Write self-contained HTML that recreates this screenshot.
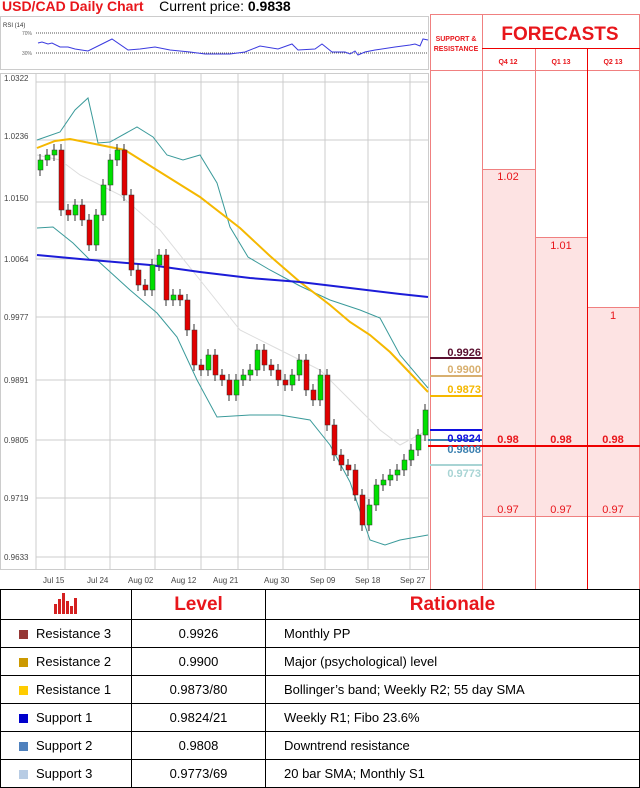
<!DOCTYPE html>
<html><head><meta charset="utf-8"><style>
body{margin:0;width:640px;height:786px;background:#fff;font-family:"Liberation Sans",sans-serif;position:relative;overflow:hidden}
.a{position:absolute}
table{border-collapse:collapse;position:absolute;left:0;top:589px;width:640px;font-size:13px}
td{border:1px solid #000;height:27px;padding:0}
.sq{display:inline-block;width:9px;height:9px;margin:0 8px 0 18px;vertical-align:-1px}
</style></head><body>
<div class="a" style="left:2px;top:-2px;font-size:14px"><b style="color:#e8161b">USD/CAD Daily Chart</b>&nbsp;&nbsp;&nbsp; Current price: <b>0.9838</b></div>
<svg class="a" style="left:0;top:0" width="640" height="590">
<rect x="0.5" y="16.5" width="428" height="53" fill="#fff" stroke="#ccc"/>
<text x="3" y="27" font-size="6" fill="#333">RSI (14)</text>
<text x="22" y="35" font-size="5" fill="#666">70%</text><text x="22" y="55" font-size="5" fill="#666">30%</text>
<line x1="36" y1="33" x2="428" y2="33" stroke="#555" stroke-dasharray="1,1"/>
<line x1="36" y1="53" x2="428" y2="53" stroke="#555" stroke-dasharray="1,1"/>
<polyline fill="none" stroke="#3a3adf" stroke-width="1" points="38,43 42,42 48,44 52,43 60,47 68,47 75,49 88,51 100,45 112,39 128,50 140,49 155,47 170,50 190,52 205,54 230,54 245,52 260,46 278,49 292,44 298,50 315,49 322,44 332,52 345,52 350,54 355,51 358,55 365,52 375,50 395,47 410,45 415,44 420,46 423,39 428,40"/>
<rect x="0.5" y="73.5" width="428" height="496" fill="#fff" stroke="#ccc"/>
<g stroke="#ccc" stroke-width="1">
<line x1="36" y1="82" x2="428" y2="82"/><line x1="36" y1="140" x2="428" y2="140"/><line x1="36" y1="202" x2="428" y2="202"/><line x1="36" y1="259" x2="428" y2="259"/><line x1="36" y1="317" x2="428" y2="317"/><line x1="36" y1="380" x2="428" y2="380"/><line x1="36" y1="440" x2="428" y2="440"/><line x1="36" y1="498" x2="428" y2="498"/><line x1="36" y1="557" x2="428" y2="557"/>
<line x1="36" y1="74" x2="36" y2="569"/>
<line x1="65" y1="74" x2="65" y2="569"/><line x1="110" y1="74" x2="110" y2="569"/><line x1="155" y1="74" x2="155" y2="569"/><line x1="201" y1="74" x2="201" y2="569"/><line x1="238" y1="74" x2="238" y2="569"/><line x1="283" y1="74" x2="283" y2="569"/><line x1="325" y1="74" x2="325" y2="569"/><line x1="368" y1="74" x2="368" y2="569"/><line x1="410" y1="74" x2="410" y2="569"/>
</g>
<g font-size="8" fill="#444">
<text x="4" y="81">1.0322</text><text x="4" y="139">1.0236</text><text x="4" y="201">1.0150</text><text x="4" y="262">1.0064</text><text x="4" y="320">0.9977</text><text x="4" y="383">0.9891</text><text x="4" y="443">0.9805</text><text x="4" y="501">0.9719</text><text x="4" y="560">0.9633</text>
<text x="43" y="583">Jul 15</text><text x="87" y="583">Jul 24</text><text x="128" y="583">Aug 02</text><text x="171" y="583">Aug 12</text><text x="213" y="583">Aug 21</text><text x="264" y="583">Aug 30</text><text x="310" y="583">Sep 09</text><text x="355" y="583">Sep 18</text><text x="400" y="583">Sep 27</text>
</g>
<polyline fill="none" stroke="#ddd" points="37,155 60,160 80,175 120,195 160,230 200,280 240,330 280,350 320,370 350,400 380,430 400,445 428,430"/>
<polyline fill="none" stroke="#3a9a9a" points="37,140 60,132 75,110 88,98 93,120 98,143 110,142 137,127 153,137 167,155 183,160 200,155 217,183 230,227 248,257 270,270 300,286 330,300 360,310 380,318 400,355 428,388"/>
<polyline fill="none" stroke="#3a9a9a" points="37,228 53,227 73,243 90,260 97,260 130,290 157,313 177,337 197,380 217,417 250,415 280,415 310,420 330,445 350,482 370,540 385,545 400,540 428,535"/>
<polyline fill="none" stroke="#f5b800" stroke-width="2" points="37,148 55,141 70,139 90,143 110,147 125,150 160,172 200,197 240,228 270,256 300,282 330,305 350,322 370,335 390,352 410,373 428,392"/>
<polyline fill="none" stroke="#1c1cd8" stroke-width="2" points="37,255 80,259 150,265 200,272 250,278 300,282 350,288 400,294 428,297"/>
<g id="c"></g>
<rect x="482" y="169" width="53" height="347" fill="#fde3e3"/>
<rect x="535" y="237" width="52" height="279" fill="#fde3e3"/>
<rect x="587" y="307" width="52" height="209" fill="#fde3e3"/>
<g stroke="#f08080" stroke-width="1">
<line x1="430.5" y1="14" x2="430.5" y2="589"/><line x1="482.5" y1="14" x2="482.5" y2="589"/><line x1="535.5" y1="48" x2="535.5" y2="589"/><line x1="639.5" y1="14" x2="639.5" y2="589"/>
<line x1="430" y1="14.5" x2="640" y2="14.5"/><line x1="430" y1="70.5" x2="640" y2="70.5"/>
<line x1="482" y1="169.5" x2="535" y2="169.5"/><line x1="535" y1="237.5" x2="587" y2="237.5"/><line x1="587" y1="307.5" x2="640" y2="307.5"/>
<line x1="482" y1="516.5" x2="640" y2="516.5"/>
</g>
<line x1="587.5" y1="48" x2="587.5" y2="589" stroke="#e00" />
<line x1="482" y1="48.5" x2="640" y2="48.5" stroke="#e00"/>
<text x="456" y="41" font-size="7" fill="#e8161b" font-weight="bold" text-anchor="middle">SUPPORT &amp;</text>
<text x="456" y="51" font-size="7" fill="#e8161b" font-weight="bold" text-anchor="middle">RESISTANCE</text>
<text x="560" y="40" font-size="19" fill="#e8161b" font-weight="bold" text-anchor="middle">FORECASTS</text>
<g font-size="7" fill="#e8161b" font-weight="bold" text-anchor="middle"><text x="508" y="64">Q4 12</text><text x="561" y="64">Q1 13</text><text x="613" y="64">Q2 13</text></g>
<g font-size="11" fill="#e8161b" text-anchor="middle"><text x="508" y="180">1.02</text><text x="561" y="249">1.01</text><text x="613" y="319">1</text>
<text x="508" y="513">0.97</text><text x="561" y="513">0.97</text><text x="613" y="513">0.97</text></g>
<line x1="428" y1="446" x2="640" y2="446" stroke="#e00" stroke-width="2"/>
<g font-size="11" fill="#e8161b" font-weight="bold" text-anchor="middle"><text x="508" y="443">0.98</text><text x="561" y="443">0.98</text><text x="613" y="443">0.98</text></g>
<line x1="430" y1="358" x2="482" y2="358" stroke="#5a1030" stroke-width="2"/>
<line x1="430" y1="376" x2="482" y2="376" stroke="#d8b070" stroke-width="2"/>
<line x1="430" y1="396" x2="482" y2="396" stroke="#f5b800" stroke-width="2"/>
<line x1="430" y1="430" x2="482" y2="430" stroke="#1010e0" stroke-width="2"/>
<line x1="428" y1="440" x2="482" y2="440" stroke="#3a80b0" stroke-width="2"/>
<line x1="430" y1="465" x2="482" y2="465" stroke="#a8d4d4" stroke-width="2"/>
<g font-size="11" font-weight="bold" text-anchor="end">
<text x="481" y="356" fill="#5a1030">0.9926</text><text x="481" y="373" fill="#d8b070">0.9900</text><text x="481" y="393" fill="#f5b800">0.9873</text>
<text x="481" y="442" fill="#1010e0">0.9824</text><text x="481" y="453" fill="#3a80b0">0.9808</text><text x="481" y="477" fill="#a8d4d4">0.9773</text></g>
</svg>
<script>
var cl=[160,155,150,210,215,205,220,245,215,185,160,150,195,270,285,290,265,255,300,295,300,330,365,370,355,375,380,395,380,375,370,350,365,370,380,385,375,360,390,400,375,425,455,465,470,495,525,505,485,480,475,470,460,450,435,410];
var s='',p=170;
for(var i=0;i<cl.length;i++){var x=38+7*i,c=cl[i],o=p,t=Math.min(o,c),b=Math.max(o,c),col=c<o?'#00e000':'#e00000';
if(b-t<2)b=t+2;
s+='<line x1="'+(x+2)+'" y1="'+(t-6)+'" x2="'+(x+2)+'" y2="'+(b+6)+'" stroke="#333"/><rect x="'+x+'" y="'+t+'" width="5" height="'+(b-t)+'" fill="'+col+'" stroke="#333" stroke-width="0.5"/>';p=c;}
document.getElementById('c').innerHTML=s;
</script>
<table>
<tr style="height:30px"><td style="width:130px;text-align:center"><svg width="26" height="22" viewBox="0 0 26 22"><g fill="#d42020"><rect x="1" y="12" width="3" height="10"/><rect x="5" y="7" width="3" height="15"/><rect x="9" y="1" width="3" height="21"/><rect x="13" y="9" width="3" height="13"/><rect x="17" y="14" width="3" height="8"/><rect x="21" y="6" width="3" height="16"/></g></svg></td>
<td style="width:133px;text-align:center;color:#e8161b;font-weight:bold;font-size:19px">Level</td>
<td style="text-align:center;color:#e8161b;font-weight:bold;font-size:19px">Rationale</td></tr>
<tr><td><span class="sq" style="background:#953735"></span>Resistance 3</td><td style="text-align:center">0.9926</td><td style="padding-left:18px">Monthly PP</td></tr>
<tr><td><span class="sq" style="background:#cc9900"></span>Resistance 2</td><td style="text-align:center">0.9900</td><td style="padding-left:18px">Major (psychological) level</td></tr>
<tr><td><span class="sq" style="background:#ffcc00"></span>Resistance 1</td><td style="text-align:center">0.9873/80</td><td style="padding-left:18px">Bollinger’s band; Weekly R2; 55 day SMA</td></tr>
<tr><td><span class="sq" style="background:#0000cc"></span>Support 1</td><td style="text-align:center">0.9824/21</td><td style="padding-left:18px">Weekly R1; Fibo 23.6%</td></tr>
<tr><td><span class="sq" style="background:#4f81bd"></span>Support 2</td><td style="text-align:center">0.9808</td><td style="padding-left:18px">Downtrend resistance</td></tr>
<tr><td><span class="sq" style="background:#b8cce4"></span>Support 3</td><td style="text-align:center">0.9773/69</td><td style="padding-left:18px">20 bar SMA; Monthly S1</td></tr>
</table>
</body></html>
